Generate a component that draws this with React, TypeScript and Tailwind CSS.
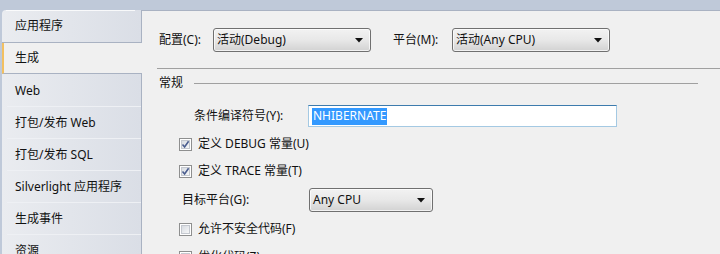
import React from "react";

const tabs = [
  "应用程序",
  "生成",
  "Web",
  "打包/发布 Web",
  "打包/发布 SQL",
  "Silverlight 应用程序",
  "生成事件",
  "资源",
];

function Arrow() {
  return (
    <svg width="8" height="5" viewBox="0 0 8 5" className="shrink-0">
      <path d="M0 0 H8 L4 4.5 Z" fill="#111" />
    </svg>
  );
}

function Combo({ value, width }: { value: string; width: string }) {
  return (
    <div
      className={`${width} flex h-[24px] items-center justify-between rounded-[3px] border border-[#707070] bg-gradient-to-b from-[#f2f2f2] via-[#e8e8e8] to-[#d2d2d2] pl-[3px] pr-[7px] shadow-[inset_0_0_0_1px_rgba(255,255,255,0.7)]`}
    >
      <span>{value}</span>
      <Arrow />
    </div>
  );
}

function Check({ checked }: { checked: boolean }) {
  return (
    <div className="flex h-[13px] w-[13px] items-center justify-center border border-[#8e8f8f] bg-white">
      <div className="relative flex h-[9px] w-[9px] items-center justify-center border border-[#c4c8cf] bg-gradient-to-br from-[#d8dce2] to-[#f6f7f8]">
        {checked && (
          <svg width="9" height="9" viewBox="0 0 9 9" className="absolute -left-px -top-px">
            <path d="M1.5 4.5 L3.6 7 L7.6 1.2" fill="none" stroke="#4a5d8f" strokeWidth="1.6" />
          </svg>
        )}
      </div>
    </div>
  );
}

function CheckRow({ label, checked, mt }: { label: string; checked: boolean; mt: string }) {
  return (
    <div className={`${mt} flex h-[22px] shrink-0 items-center gap-[6px] pl-[22px]`}>
      <Check checked={checked} />
      <span>{label}</span>
    </div>
  );
}

export default function App() {
  return (
    <div
      className="flex h-[254px] w-[720px] overflow-hidden bg-[#bfc9d9] pt-[10px] text-[12px] leading-none text-[#111]"
      style={{ fontFamily: '"Noto Sans", "Noto Sans CJK SC", sans-serif' }}
    >
      {/* left tab strip */}
      <div className="ml-[2px] flex w-[140px] shrink-0 flex-col overflow-hidden rounded-tl-[4px]">
        {tabs.map((t, i) => {
          if (i === 1) {
            return (
              <div
                key={t}
                className="flex h-[31px] shrink-0 items-center border-b border-l-2 border-b-[#a9b2c2] border-l-[#f3c060] bg-[#f0f0f0] pl-[11px]"
              >
                {t}
              </div>
            );
          }
          const h = i === 0 || i === 2 ? "h-[33px]" : "h-[32px]";
          const sep = i === 0 ? "border-b border-b-[#a9b2c2]" : "";
          return (
            <div
              key={t}
              className={`${h} relative flex shrink-0 items-center border-r border-r-[#a9b2c2] bg-gradient-to-r from-[#eaecf0] to-[#dadee6] pl-[13px] ${sep}`}
            >
              {i === 0 && <div className="absolute left-[4px] right-[6px] top-0 h-px bg-white/80" />}
              {t}
              {i > 1 && <div className="absolute bottom-0 left-[5px] right-0 h-px bg-[#eef0f4]" />}
            </div>
          );
        })}
      </div>

      {/* right content */}
      <div className="flex min-w-0 flex-1 flex-col border-t border-t-[#a9b2c2] bg-[#f0f0f0] pl-[15px]">
        <div className="mt-[17px] flex h-[24px] shrink-0 items-center">
          <span className="ml-[2px] w-[54px]">配置(C):</span>
          <Combo value="活动(Debug)" width="w-[158px]" />
          <span className="ml-[22px] w-[59px]">平台(M):</span>
          <Combo value="活动(Any CPU)" width="w-[158px]" />
        </div>

        <div className="mt-[16px] h-px shrink-0 bg-[#a0a0a0]" />

        <div className="mt-[6px] flex h-[16px] shrink-0 items-center">
          <span className="ml-[2px] w-[35px]">常规</span>
          <div className="mr-[22px] h-px flex-1 bg-[#a0a0a0]" />
        </div>

        <div className="mt-[14px] flex h-[22px] shrink-0 items-center">
          <span className="ml-[37px] w-[114px]">条件编译符号(Y):</span>
          <div className="flex h-[22px] w-[309px] items-center border border-[#a4c9e3] border-t-[#3d7bad] bg-white pl-[3px]">
            <span className="flex h-[17px] items-center bg-[#3399ff] px-px text-white">NHIBERNATE</span>
          </div>
        </div>

        <CheckRow mt="mt-[6px]" checked label="定义 DEBUG 常量(U)" />
        <CheckRow mt="mt-[5px]" checked label="定义 TRACE 常量(T)" />

        <div className="mt-[6px] flex h-[24px] shrink-0 items-center">
          <span className="ml-[25px] w-[127px]">目标平台(G):</span>
          <Combo value="Any CPU" width="w-[124px]" />
        </div>

        <CheckRow mt="mt-[6px]" checked={false} label="允许不安全代码(F)" />
        <CheckRow mt="mt-[6px]" checked={false} label="优化代码(Z)" />
      </div>
    </div>
  );
}
